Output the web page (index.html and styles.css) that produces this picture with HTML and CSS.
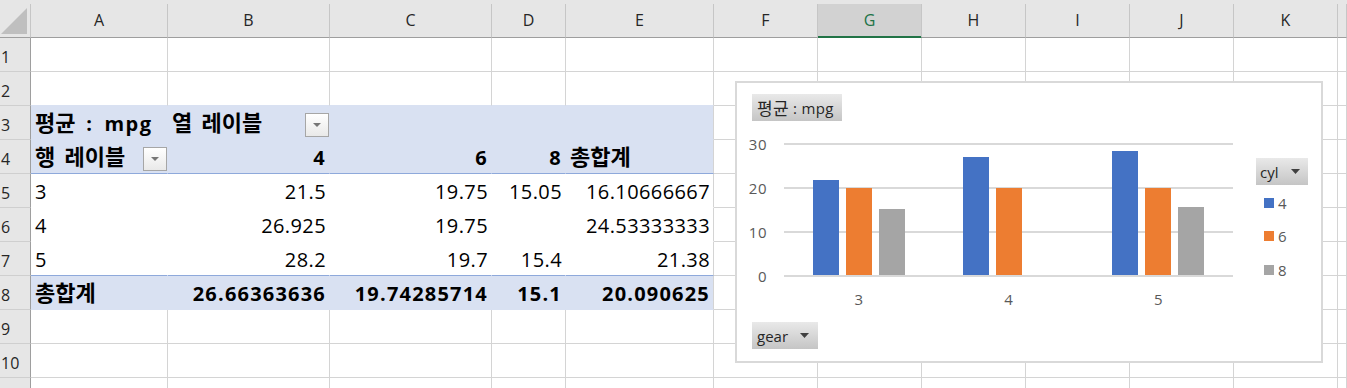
FILE: index.html
```html
<!DOCTYPE html>
<html lang="ko">
<head>
<meta charset="utf-8">
<title>Pivot</title>
<link rel="stylesheet" href="styles.css">
</head>
<body>
<div class="page">
  <div class="strip"></div>
  <div class="sheet">
    <!-- header -->
    <div class="corner"><svg width="30" height="33" viewBox="0 0 30 33"><path d="M27 4V30H1Z" fill="#bfbfbf"/></svg></div>
    <div class="ch">A</div><div class="ch">B</div><div class="ch">C</div><div class="ch">D</div><div class="ch">E</div><div class="ch">F</div><div class="ch sel">G</div><div class="ch">H</div><div class="ch">I</div><div class="ch">J</div><div class="ch">K</div><div class="ch"></div>

    <!-- row 1 -->
    <div class="rh">1</div>
    <div class="cell"></div><div class="cell"></div><div class="cell"></div><div class="cell"></div><div class="cell"></div><div class="cell"></div><div class="cell"></div><div class="cell"></div><div class="cell"></div><div class="cell"></div><div class="cell"></div><div class="cell"></div>

    <!-- row 2 -->
    <div class="rh">2</div>
    <div class="cell above"></div><div class="cell above"></div><div class="cell above"></div><div class="cell above"></div><div class="cell above"></div><div class="cell"></div><div class="cell"></div><div class="cell"></div><div class="cell"></div><div class="cell"></div><div class="cell"></div><div class="cell"></div>

    <!-- row 3 -->
    <div class="rh">3</div>
    <div class="cell pv b wide"><span class="ko">평균</span> : mpg</div>
    <div class="cell pv b split"><span><span class="ko">열 레이블</span></span><span class="dd"><svg width="8" height="4" viewBox="0 0 8 4"><path d="M0 0H8L4 4Z" fill="#767676"/></svg></span></div>
    <div class="cell pv"></div><div class="cell pv"></div><div class="cell pv last"></div>
    <div class="cell"></div><div class="cell"></div><div class="cell"></div><div class="cell"></div><div class="cell"></div><div class="cell"></div><div class="cell"></div>

    <!-- row 4 -->
    <div class="rh">4</div>
    <div class="cell pv ln b split"><span><span class="ko">행 레이블</span></span><span class="dd"><svg width="8" height="4" viewBox="0 0 8 4"><path d="M0 0H8L4 4Z" fill="#767676"/></svg></span></div>
    <div class="cell pv ln b r">4</div>
    <div class="cell pv ln b r">6</div>
    <div class="cell pv ln b r">8</div>
    <div class="cell pv ln last b"><span class="ko">총합계</span></div>
    <div class="cell"></div><div class="cell"></div><div class="cell"></div><div class="cell"></div><div class="cell"></div><div class="cell"></div><div class="cell"></div>

    <!-- row 5 -->
    <div class="rh">5</div>
    <div class="cell pw">3</div>
    <div class="cell pw r">21.5</div>
    <div class="cell pw r">19.75</div>
    <div class="cell pw r">15.05</div>
    <div class="cell pw last r">16.10666667</div>
    <div class="cell"></div><div class="cell"></div><div class="cell"></div><div class="cell"></div><div class="cell"></div><div class="cell"></div><div class="cell"></div>

    <!-- row 6 -->
    <div class="rh">6</div>
    <div class="cell pw">4</div>
    <div class="cell pw r">26.925</div>
    <div class="cell pw r">19.75</div>
    <div class="cell pw r"></div>
    <div class="cell pw last r">24.53333333</div>
    <div class="cell"></div><div class="cell"></div><div class="cell"></div><div class="cell"></div><div class="cell"></div><div class="cell"></div><div class="cell"></div>

    <!-- row 7 -->
    <div class="rh">7</div>
    <div class="cell pw ln">5</div>
    <div class="cell pw ln r">28.2</div>
    <div class="cell pw ln r">19.7</div>
    <div class="cell pw ln r">15.4</div>
    <div class="cell pw ln last r">21.38</div>
    <div class="cell"></div><div class="cell"></div><div class="cell"></div><div class="cell"></div><div class="cell"></div><div class="cell"></div><div class="cell"></div>

    <!-- row 8 -->
    <div class="rh">8</div>
    <div class="cell pv b"><span class="ko">총합계</span></div>
    <div class="cell pv b r">26.66363636</div>
    <div class="cell pv b r">19.74285714</div>
    <div class="cell pv b r">15.1</div>
    <div class="cell pv last b r">20.090625</div>
    <div class="cell"></div><div class="cell"></div><div class="cell"></div><div class="cell"></div><div class="cell"></div><div class="cell"></div><div class="cell"></div>

    <!-- row 9 -->
    <div class="rh">9</div>
    <div class="cell"></div><div class="cell"></div><div class="cell"></div><div class="cell"></div><div class="cell"></div><div class="cell"></div><div class="cell"></div><div class="cell"></div><div class="cell"></div><div class="cell"></div><div class="cell"></div><div class="cell"></div>

    <!-- row 10 -->
    <div class="rh">10</div>
    <div class="cell"></div><div class="cell"></div><div class="cell"></div><div class="cell"></div><div class="cell"></div><div class="cell"></div><div class="cell"></div><div class="cell"></div><div class="cell"></div><div class="cell"></div><div class="cell"></div><div class="cell"></div>

    <!-- row 11 (partly visible) -->
    <div class="rh"></div>
    <div class="cell"></div><div class="cell"></div><div class="cell"></div><div class="cell"></div><div class="cell"></div><div class="cell"></div><div class="cell"></div><div class="cell"></div><div class="cell"></div><div class="cell"></div><div class="cell"></div><div class="cell"></div>
  </div>

  <div class="chart">
    <div class="btn ctitle"><span class="kos">평균</span>&nbsp;: mpg</div>
    <div class="yaxis"><span>30</span><span>20</span><span>10</span><span>0</span></div>
    <div class="plot">
      <div class="grp">
        <div class="bar blue" style="height:94.6px"></div>
        <div class="bar orange" style="height:86.9px"></div>
        <div class="bar gray" style="height:66.2px"></div>
      </div>
      <div class="grp">
        <div class="bar blue" style="height:118.5px"></div>
        <div class="bar orange" style="height:86.9px"></div>
        <div class="bar gray" style="height:0px"></div>
      </div>
      <div class="grp">
        <div class="bar blue" style="height:124.1px"></div>
        <div class="bar orange" style="height:86.7px"></div>
        <div class="bar gray" style="height:67.8px"></div>
      </div>
    </div>
    <div class="xaxis"><span>3</span><span>4</span><span>5</span></div>
    <div class="btn gear">gear<svg class="tri" width="9" height="5" viewBox="0 0 9 5"><path d="M0 0H9L4.5 5Z" fill="#404040"/></svg></div>
    <div class="legend">
      <div class="btn lbtn">cyl<svg class="tri" width="9" height="5" viewBox="0 0 9 5"><path d="M0 0H9L4.5 5Z" fill="#404040"/></svg></div>
      <div class="litem"><span class="sw blue"></span>4</div>
      <div class="litem"><span class="sw orange"></span>6</div>
      <div class="litem"><span class="sw gray"></span>8</div>
    </div>
  </div>
</div>
</body>
</html>
```

FILE: styles.css
```css
* { box-sizing: border-box; }
html, body { margin: 0; padding: 0; background: #fff; overflow: hidden; }
body {
  width: 1347px;
  height: 388px;
  font-family: "Open Sans", "Noto Sans CJK KR", sans-serif;
  color: #000;
}
.page { position: relative; height: 388px; overflow: hidden; }
.strip { height: 4px; background: #e6e6e6; }
.sheet {
  display: grid;
  grid-template-columns: 31px 137px 162px 162px 74px 148px repeat(6, 104px) 1fr;
  grid-auto-rows: 34px;
}
.corner {
  background: #e6e6e6;
  border-right: 1px solid #c6c6c6;
  border-bottom: 1px solid #9e9e9e;
}
.corner svg { display: block; }
.ch {
  background: #e6e6e6;
  border-right: 1px solid #c6c6c6;
  border-bottom: 1px solid #9e9e9e;
  text-align: center;
  font-size: 16px;
  line-height: 33px;
  color: #262626;
}
.ch.sel {
  background: #d2d2d2;
  color: #217346;
  border-bottom-color: #217346;
  box-shadow: inset 0 -1px 0 #217346;
}
.rh {
  background: #e6e6e6;
  border-right: 1px solid #9e9e9e;
  border-bottom: 1px solid #cfcfcf;
  font-size: 16px;
  line-height: 33px;
  padding: 3px 0 0 1px;
  color: #262626;
  white-space: nowrap;
}
.cell {
  border-right: 1px solid #d4d4d4;
  border-bottom: 1px solid #d4d4d4;
  font-size: 20px;
  line-height: 33px;
  padding: 1px 3px 0 4px;
  white-space: nowrap;
  letter-spacing: 0.4px;
}
.b { font-weight: 700; letter-spacing: 1.2px; }
.wide { word-spacing: 4px; letter-spacing: 1.6px; }
.r { text-align: right; }
.pv { background: #d9e1f2; border-color: #d9e1f2; }
.pw { border-color: #fff; }
.cell.last { border-right-color: #d4d4d4; }
.cell.ln { border-bottom-color: #8ea9db; }
.cell.above { border-bottom-color: #d9e1f2; }
.split { display: flex; align-items: flex-start; padding-right: 0; }
.dd {
  margin-left: auto;
  margin-top: 6px;
  width: 24px;
  height: 24px;
  border: 1px solid #a6a6a6;
  background: linear-gradient(#ffffff, #e9e9e9);
  display: flex;
  align-items: center;
  justify-content: center;
}
.ko {
  font-family: "Noto Sans CJK KR", sans-serif;
  font-size: 22px;
  letter-spacing: 0;
  word-spacing: 3px;
  line-height: 1;
}

/* chart */
.chart {
  position: absolute;
  left: 735px;
  top: 81px;
  width: 588px;
  height: 282px;
  border: 2px solid #d9d9d9;
  background: #fff;
  padding-top: 11px;
  display: grid;
  grid-template-columns: 47px 449px 1fr;
  grid-template-rows: 27px 22px 134px 45px 27px;
  font-family: "Open Sans", "Noto Sans CJK KR", sans-serif;
}
.btn {
  display: inline-flex;
  align-items: center;
  height: 27px;
  background: linear-gradient(#e9e9e9, #c5c5c5);
  font-size: 15px;
  color: #262626;
  padding: 0 6px 0 5px;
  white-space: nowrap;
}
.kos { font-family: "Noto Sans CJK KR", sans-serif; font-size: 17px; }
.ctitle { grid-column: 1 / 3; grid-row: 1; justify-self: start; margin-left: 15px; padding-right: 8px; letter-spacing: 0.3px; }
.gear { grid-column: 1 / 3; grid-row: 5; justify-self: start; margin-left: 15px; padding-right: 9px; }
.tri { margin-left: 12px; }
.yaxis {
  grid-column: 1;
  grid-row: 3;
  display: flex;
  flex-direction: column;
  margin-top: -21px;
  padding-right: 17px;
  text-align: right;
}
.yaxis span { height: 44px; line-height: 44px; font-size: 15px; color: #595959; letter-spacing: 0.5px; }
.plot {
  grid-column: 2;
  grid-row: 3;
  display: flex;
  align-items: flex-start;
  background: repeating-linear-gradient(to bottom, #d9d9d9 0 2px, transparent 2px 44px);
}
.grp {
  flex: 1;
  height: 132px;
  display: flex;
  align-items: flex-end;
  justify-content: center;
  gap: 7px;
}
.bar { width: 26px; }
.blue { background: #4472c4; }
.orange { background: #ed7d31; }
.gray { background: #a5a5a5; }
.xaxis { grid-column: 2; grid-row: 4; display: flex; padding-top: 12px; }
.xaxis span { flex: 1; text-align: center; font-size: 15px; line-height: 20px; color: #595959; }
.legend {
  grid-column: 3;
  grid-row: 1 / 5;
  margin-top: 64px;
  margin-left: 23px;
  display: flex;
  flex-direction: column;
  align-items: flex-start;
}
.lbtn { padding-left: 4px; padding-right: 8px; }
.litem {
  display: flex;
  align-items: center;
  gap: 4px;
  height: 33.5px;
  margin-left: 8px;
  margin-top: 1px;
  font-size: 15px;
  color: #595959;
}
.litem + .litem { margin-top: 0; }
.sw { width: 10px; height: 10px; }
```
